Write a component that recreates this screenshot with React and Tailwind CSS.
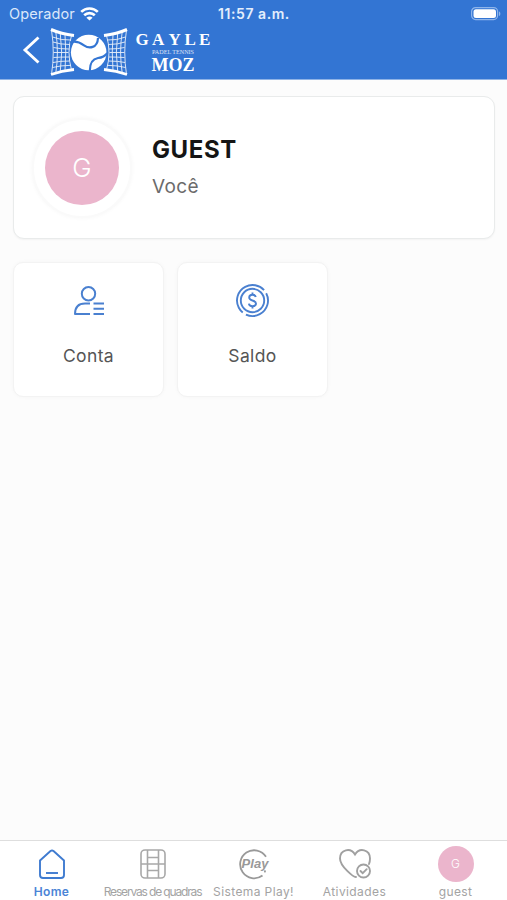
const BackIcon = () => (
    <svg className="w-5 h-7" viewBox="0 0 20 28" fill="none" stroke="white" strokeWidth="2.9">
        <path d="M17.500 1.500 4 14l13.500 12.500" />
    </svg>
);

const WifiIcon = () => (
    <svg className="w-[19px] h-[14px]" viewBox="0 0 19 14" fill="none" stroke="white" strokeWidth="2.600">
        <path d="M1.200 4.900C5.800.3 13.200.3 17.800 4.900" />
        <path d="M4.200 8.300c3-2.900 7.600-2.900 10.600 0" />
        <path d="M9.500 13.500 6.400 10.700c1.700-1.600 4.500-1.600 6.200 0z" fill="white" stroke="none" />
    </svg>
);

const BatteryIcon = () => (
    <svg className="w-[30px] h-[14px]" viewBox="0 0 30 14">
        <rect x="0.600" y="0.600" width="26" height="12" rx="4" fill="none" stroke="#8fb5ea" strokeWidth="1.200" />
        <rect x="2.500" y="2.300" width="22.500" height="8.700" rx="2.500" fill="white" />
        <path d="M28 4.500c1.800.5 1.800 4 0 4.500z" fill="#8fb5ea" />
    </svg>
);

const Net = () => (
    <g fill="none" stroke="white">
        <path d="M3 2.500C10 5.500 18 7.500 26 8.500" strokeWidth="3" />
        <path d="M3 47.500C10 45 18 43.300 26 42.500" strokeWidth="2.800" />
        <g strokeWidth="0.900" opacity="0.900">
            <path d="M3.500 3Q7 25 3.500 47.500M7.800 5Q11 25 7.800 46M12.300 6.500Q15 25 12.300 44.500M17 7.500Q18.500 25 17 43.500M23.500 8.500Q18.500 25 23.500 43" />
            <path d="M4.500 10Q13 13.500 23 13M5 15Q12 17.500 21.500 17.500M5.500 20.500Q12 22 21 22M5.500 25.500H20.500M5.500 30.500Q12 30 21 30M5 35.500Q12 34 21.500 34M4.500 40.500Q12 38.500 23 38.300" />
        </g>
    </g>
);

const Logo = () => (
    <svg className="w-[166px] h-[52px]" viewBox="0 0 166 52">
        <Net />
        <g transform="translate(82 0) scale(-1 1)">
            <Net />
        </g>
        <circle cx="40.700" cy="25.500" r="18.900" fill="#3375d3" />
        <circle cx="40.700" cy="25.500" r="17.800" fill="white" />
        <path d="M22 15.500C27 13.500 32 15.500 36 18.300C41 21.800 49.500 21.500 50 11" fill="none" stroke="#3375d3" strokeWidth="2.200" />
        <path d="M41.800 44C41.800 36 45 31.800 50 31Q56 30.500 59.500 26" fill="none" stroke="#3375d3" strokeWidth="2.200" />
        <g fill="white" fontFamily="'Liberation Serif', serif">
            <text y="18" fontSize="17" fontWeight="bold">
                <tspan x="87.500">G</tspan>
                <tspan x="104">A</tspan>
                <tspan x="120.500">Y</tspan>
                <tspan x="136.500">L</tspan>
                <tspan x="151">E</tspan>
            </text>
            <text x="104" y="27" fontSize="6.500" textLength="42" lengthAdjust="spacingAndGlyphs" opacity="0.800">PADEL TENNIS</text>
            <text x="103.500" y="44" fontSize="19" fontWeight="bold" textLength="43" lengthAdjust="spacingAndGlyphs">MOZ</text>
        </g>
    </svg>
);

const AccountIcon = () => (
    <svg className="w-8 h-8" viewBox="0 0 32 32" fill="none" stroke="#4a80d0" strokeWidth="2">
        <circle cx="15.500" cy="8.700" r="6.700" />
        <path d="M17 18.500h-5C5.500 18.500 2 22 2 29h15" strokeLinejoin="round" />
        <path d="M20.500 18.500h10.500M20.500 23.700h10.500M20.500 29h10.500" />
    </svg>
);

const BalanceIcon = () => (
    <svg className="w-[34px] h-[34px]" viewBox="0 0 34 34" fill="none" stroke="#4a80d0" strokeWidth="1.900">
        <circle cx="16.500" cy="16.500" r="11.700" />
        <circle cx="16.500" cy="16.500" r="15.500" pathLength="360" strokeDasharray="143 14 189 14" transform="rotate(-28 16.500 16.500)" />
        <path d="M19.800 13c-.3-1.500-1.500-2.300-3.300-2.300-2 0-3.300 1-3.300 2.700 0 1.900 1.500 2.500 3.300 3.100 2 .6 3.500 1.300 3.500 3.100 0 1.700-1.400 2.700-3.500 2.700-2 0-3.400-.9-3.600-2.600M16.500 8.500v2.200M16.500 22.300v2.200" />
    </svg>
);

const HomeIcon = () => (
    <svg className="w-8 h-8" viewBox="0 0 32 32" fill="none" stroke="#3f7bd0" strokeWidth="1.900" strokeLinejoin="round">
        <path d="M4 12.500 14.500 3q1.500-1.100 3 0L28 12.500V27q0 3-3 3H7q-3 0-3-3z" />
        <path d="M10 25h12" />
    </svg>
);

const CourtIcon = () => (
    <svg className="w-8 h-8" viewBox="0 0 32 32" fill="none" stroke="#a8a8a8" strokeWidth="1.600">
        <rect x="4" y="2" width="24" height="28" rx="4" />
        <path d="M10.500 2v28M21.500 2v28M4 16h24M10.500 9.500h11M10.500 22.500h11" />
    </svg>
);

const PlayIcon = () => (
    <svg className="w-8 h-8" viewBox="0 0 32 32" fill="none" stroke="#999999" strokeWidth="1.800">
        <path d="M28 8.800A14 14 0 1 0 24.500 27.500" />
        <path d="M26 23.500l1.800-.3" strokeWidth="2" />
        <text x="3.500" y="19.500" fontSize="13" fontWeight="bold" fontStyle="italic" fontFamily="'Liberation Sans', sans-serif" fill="#999999" stroke="none" textLength="27" lengthAdjust="spacing">Play</text>
    </svg>
);

const ActivityIcon = () => (
    <svg className="w-8 h-8" viewBox="0 0 32 32" fill="none" stroke="#a0a0a0" strokeWidth="1.900" strokeLinecap="round">
        <path d="M17 29C15 29.500 1 18.500 1 10.500 1 1.500 11.500-1 16 6.500 20.500-1 31 1.500 31 10.500q0 3-1 5.500" />
        <circle cx="24.500" cy="23" r="6.500" />
        <path d="m21.500 23 2.200 2.200 4-4" />
    </svg>
);

const Tile = ({ icon, label }) => (
    <div className="w-[151px] h-[135px] pt-[21px] flex flex-col items-center bg-white border border-[#f3f3f3] rounded-[10px] shadow-[0_0_4px_rgba(0,0,0,0.03)]">
        <div className="h-[34px] flex items-center justify-center">{icon}</div>
        <span className="mt-[26px] text-[17.500px] leading-6 tracking-[0.350px] text-[#555]">{label}</span>
    </div>
);

const TabItem = ({ icon, label, className }) => (
    <div className="w-[101px] flex flex-col items-center">
        <div className="h-[38px] flex items-center justify-center">{icon}</div>
        <span className={`mt-px text-xs leading-4 whitespace-nowrap ${className}`}>{label}</span>
    </div>
);

const App = () => {
    return (
        <div className="w-full h-screen flex flex-col overflow-hidden bg-[#fcfcfc] font-['Inter',sans-serif]">
            <header className="h-20 shrink-0 bg-[#3375d3] border-b border-[#8fb3e6] text-white">
                <div className="h-[27px] pl-[9px] pr-[6px] grid grid-cols-3 items-center">
                    <div className="flex items-center gap-[5px] text-[#dce8fa]">
                        <span className="text-[14.500px] tracking-[0.100px]">Operador</span>
                        <WifiIcon />
                    </div>
                    <span className="-ml-0.5 text-center text-sm font-semibold tracking-[0.550px] text-[#e4eefc]">11:57 a.m.</span>
                    <div className="flex justify-end">
                        <BatteryIcon />
                    </div>
                </div>
                <div className="flex pl-[21px]">
                    <div className="w-[27px] pt-[9px]">
                        <BackIcon />
                    </div>
                    <Logo />
                </div>
            </header>

            <main className="flex-1 pt-4 px-[13px]">
                <section className="w-[482px] h-[143px] pl-[18px] flex items-center bg-white border border-[#e9ebeb] rounded-[11px] shadow-[0_1px_2px_rgba(0,0,0,0.04)]">
                    <div className="w-[100px] h-[100px] flex items-center justify-center rounded-full bg-white border-2 border-[#fafafa] shadow-[0_0_4px_rgba(0,0,0,0.04)]">
                        <div className="w-[74px] h-[74px] flex items-center justify-center rounded-full bg-[#ebb5cc] text-[26px] font-light text-white">G</div>
                    </div>
                    <div className="ml-5 pt-px">
                        <h1 className="text-2xl leading-8 font-bold tracking-[0.600px] text-[#151515]">GUEST</h1>
                        <p className="mt-[5px] text-[19px] leading-8 tracking-[0.400px] text-[#6b6b6b]">Você</p>
                    </div>
                </section>

                <section className="mt-[23px] flex gap-[13px]">
                    <Tile icon={<AccountIcon />} label="Conta" />
                    <Tile icon={<BalanceIcon />} label="Saldo" />
                </section>
            </main>

            <nav className="h-[60px] shrink-0 pt-1 pl-px flex bg-white border-t border-[#dedede]">
                <TabItem icon={<HomeIcon />} label="Home" className="font-semibold tracking-[0.300px] text-[#4b84d6]" />
                <TabItem icon={<CourtIcon />} label="Reservas de quadras" className="tracking-[-1.150px] text-[#a3a3a3]" />
                <TabItem icon={<PlayIcon />} label="Sistema Play!" className="tracking-[0.400px] text-[#a3a3a3]" />
                <TabItem icon={<ActivityIcon />} label="Atividades" className="tracking-[0.400px] text-[#a3a3a3]" />
                <TabItem
                    icon={<div className="w-9 h-9 flex items-center justify-center rounded-full bg-[#ebb5cc] text-xs font-light text-white">G</div>}
                    label="guest"
                    className="tracking-[0.400px] text-[#a3a3a3]"
                />
            </nav>
        </div>
    );
};

export default App;
